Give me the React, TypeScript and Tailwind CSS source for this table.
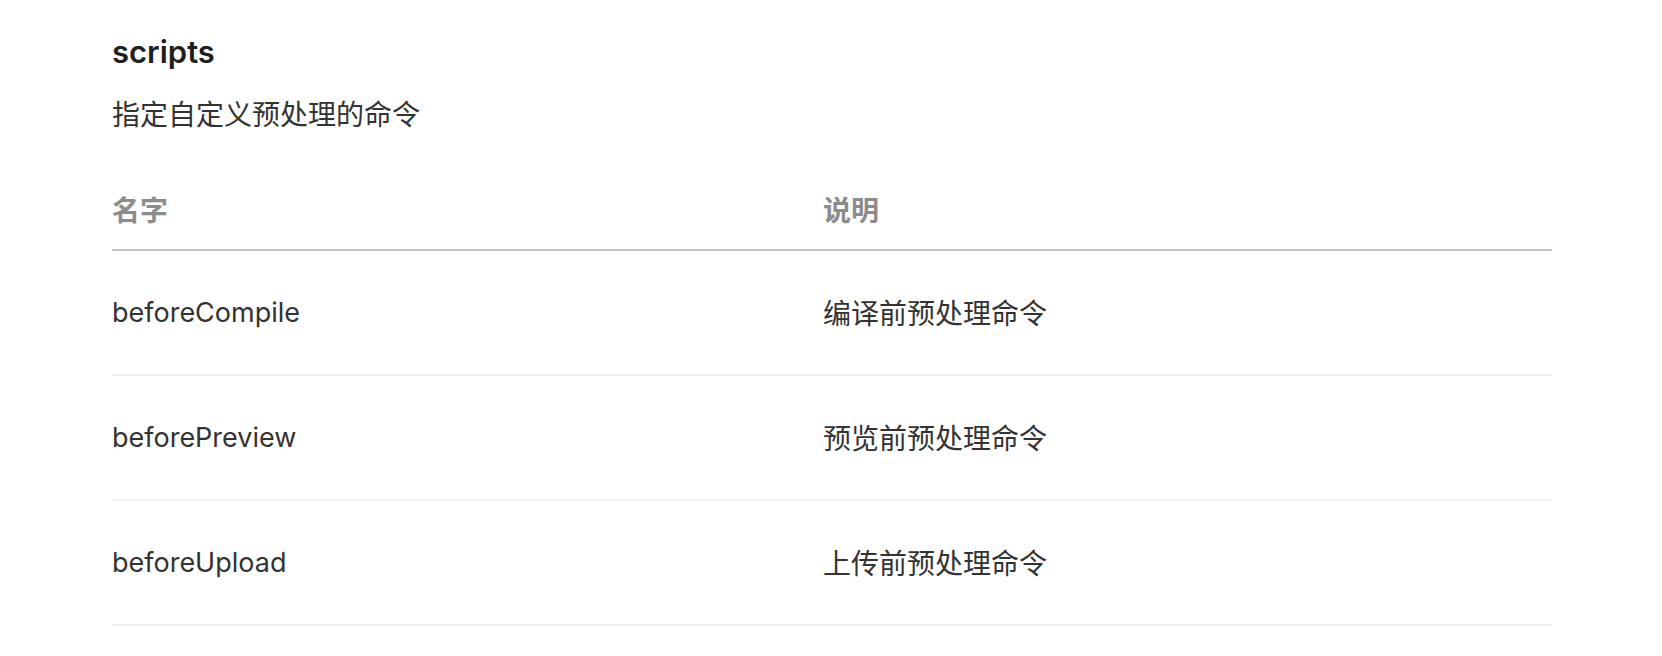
const rows = [
  { name: "beforeCompile", desc: "编译前预处理命令" },
  { name: "beforePreview", desc: "预览前预处理命令" },
  { name: "beforeUpload", desc: "上传前预处理命令" },
];

export default function App() {
  return (
    <div
      className="min-h-screen bg-white pl-[112px] pt-[32px]"
      style={{ fontFamily: 'Inter, "Noto Sans CJK SC", sans-serif' }}
    >
      {/* Title + description */}
      <h2 className="text-[31px] leading-[40px] font-semibold text-[#1f1f1f]">scripts</h2>
      <p className="mt-[23px] text-[28px] leading-[40px] text-[#333333]">指定自定义预处理的命令</p>

      {/* Table */}
      <div className="mt-[37px] w-[1440px]">
        <div className="grid h-[79px] grid-cols-[711px_1fr] items-center border-b-2 border-[#c6c6c6] text-[28px] font-bold text-[#8c8c8c]">
          <div>名字</div>
          <div>说明</div>
        </div>
        {rows.map((r) => (
          <div
            key={r.name}
            className="grid h-[125px] grid-cols-[711px_1fr] items-center border-b-2 border-[#f0f0f0] pt-[2px] text-[28px] text-[#333333]"
          >
            <div className="text-[27px]">{r.name}</div>
            <div>{r.desc}</div>
          </div>
        ))}
      </div>
    </div>
  );
}
